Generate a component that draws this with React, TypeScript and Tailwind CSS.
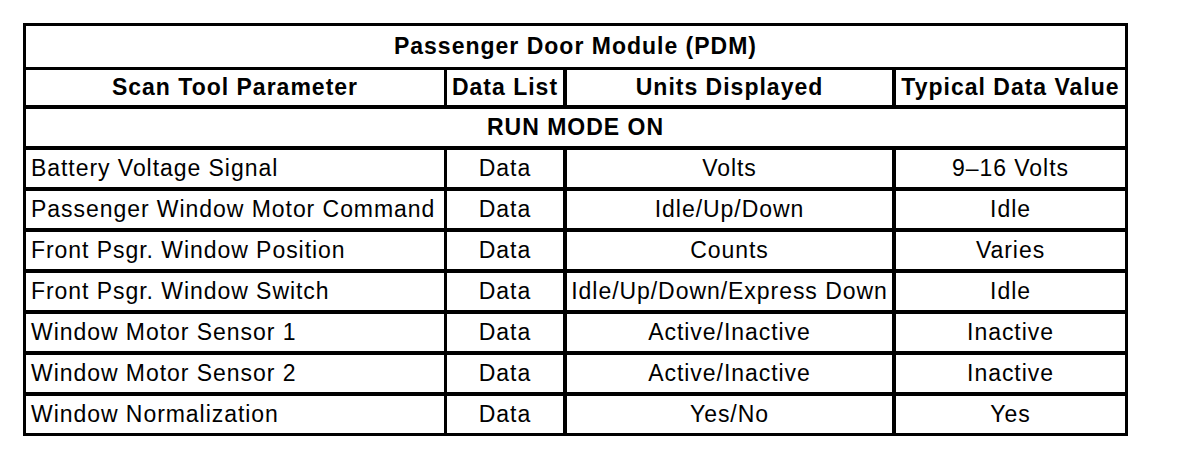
const rows = [
  ["Battery Voltage Signal", "Data", "Volts", "9–16 Volts"],
  ["Passenger Window Motor Command", "Data", "Idle/Up/Down", "Idle"],
  ["Front Psgr. Window Position", "Data", "Counts", "Varies"],
  ["Front Psgr. Window Switch", "Data", "Idle/Up/Down/Express Down", "Idle"],
  ["Window Motor Sensor 1", "Data", "Active/Inactive", "Inactive"],
  ["Window Motor Sensor 2", "Data", "Active/Inactive", "Inactive"],
  ["Window Normalization", "Data", "Yes/No", "Yes"],
]

export default function App() {
  return (
    <div className="w-[1184px] h-[468px] bg-white pt-[23px] pl-[23px] text-black font-['Liberation_Sans',Arial,sans-serif]">
      <div className="w-[1105px] border-[3px] border-black">
        <div className="h-[41px] flex items-center justify-center font-bold text-[23px] tracking-[1px]">
          Passenger Door Module (PDM)
        </div>
        <div className="h-[38px] flex border-t-[3px] border-black font-bold text-[23px] tracking-[1px]">
          <div className="w-[418px] flex items-center justify-center">Scan Tool Parameter</div>
          <div className="w-[119px] border-l-[3px] border-black flex items-center justify-center">Data List</div>
          <div className="w-[329px] border-l-[4px] border-black flex items-center justify-center">Units Displayed</div>
          <div className="w-[233px] border-l-[4px] border-black flex items-center justify-center">Typical Data Value</div>
        </div>
        <div className="h-[41px] flex items-center justify-center border-t-[4px] border-black font-bold text-[23px] tracking-[1px]">
          RUN MODE ON
        </div>
        {rows.map((r, i) => (
          <div key={i} className="h-[41px] flex border-t-[4px] border-black text-[23px] tracking-[0.95px]">
            <div className="w-[418px] flex items-center pl-[5px] whitespace-nowrap">{r[0]}</div>
            <div className="w-[119px] border-l-[3px] border-black flex items-center justify-center">{r[1]}</div>
            <div className="w-[329px] border-l-[4px] border-black flex items-center justify-center whitespace-nowrap">{r[2]}</div>
            <div className="w-[233px] border-l-[4px] border-black flex items-center justify-center">{r[3]}</div>
          </div>
        ))}
      </div>
    </div>
  )
}
